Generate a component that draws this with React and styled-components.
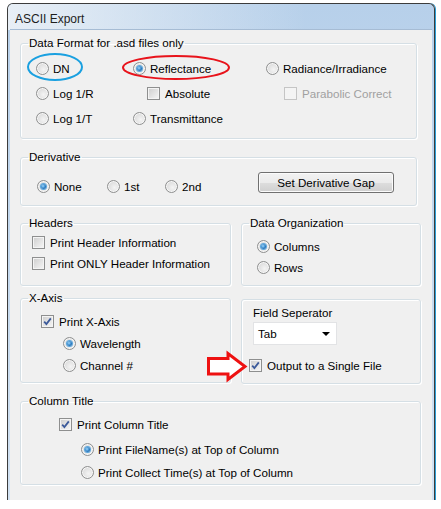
import React from 'react';
import styled, { createGlobalStyle } from 'styled-components';

const GlobalStyle = createGlobalStyle`
  html, body { margin: 0; padding: 0; background: #fff; }
  body {
    font-family: "Liberation Sans", Arial, sans-serif;
    font-size: 11.6px;
    color: #000;
  }
`;

const Page = styled.div`
  padding: 3px 0 0 7px;
`;

const Window = styled.div`
  box-sizing: border-box;
  width: 428px;
  height: 497px;
  display: flex;
  flex-direction: column;
  border: 1px solid #3c3c3c;
  border-bottom: none;
  border-radius: 6px 6px 0 0;
  background: linear-gradient(to bottom, #b7d0ea, #d3e3f3);
  box-shadow: 1px 0 0 #2a9ed6;
  overflow: hidden;
`;

const TitleBar = styled.div`
  height: 26px;
  display: flex;
  align-items: center;
  padding: 3px 0 0 7px;
  box-sizing: border-box;
  font-size: 12px;
  color: #1e1e1e;
  background: linear-gradient(to right, rgba(240, 244, 248, 0.85), rgba(240, 244, 248, 0) 70%);
`;

const Client = styled.div`
  position: relative;
  flex: 1;
  margin: 0 2px;
  padding: 6px 0 0 10px;
  background: #f0f0f0;
  box-shadow: 0 -1px 0 #a6bcd4;
  display: flex;
  flex-direction: column;
`;

const Group = styled.fieldset`
  box-sizing: border-box;
  width: ${p => p.$w}px;
  height: ${p => p.$h}px;
  margin: ${p => p.$mt || 0}px 0 0 0;
  padding: 0;
  min-width: 0;
  border: 1px solid #d5dfe5;
  border-radius: 3px;
  box-shadow: inset 1px 1px 0 #fff, 1px 1px 0 #fff;
`;

const Legend = styled.legend`
  margin-left: 7px;
  padding: 0 1px;
  line-height: 14px;
`;

const Panel = styled.div`
  box-sizing: border-box;
  width: ${p => p.$w}px;
  height: ${p => p.$h}px;
  margin-top: ${p => p.$mt || 0}px;
  padding: 6px 0 0 11px;
  border: 1px solid #d5dfe5;
  border-radius: 3px;
  box-shadow: inset 1px 1px 0 #fff, 1px 1px 0 #fff;
  display: flex;
  flex-direction: column;
`;

const Grid = styled.div`
  display: grid;
  grid-template-columns: ${p => p.$cols || 'auto'};
  grid-auto-rows: ${p => p.$row || 21}px;
  align-items: center;
  padding: ${p => p.$pad};
`;

const Stack = styled.div`
  display: flex;
  flex-direction: column;
  padding: ${p => p.$pad};
`;

const Row = styled.div`
  display: flex;
  gap: 10px;
  margin-top: ${p => p.$mt || 0}px;
`;

const Line = styled.div`
  height: ${p => p.$h || 21}px;
  display: flex;
  align-items: center;
  margin-left: ${p => p.$indent || 0}px;
  margin-top: ${p => p.$mt || 0}px;
  margin-bottom: ${p => p.$mb || 0}px;
`;

const Item = styled.label`
  display: inline-flex;
  align-items: center;
  gap: ${p => p.$gap || 5}px;
  margin-left: ${p => p.$indent || 0}px;
  color: ${p => (p.$disabled ? '#a0a0a0' : '#000')};
  white-space: nowrap;
`;

const RadioDot = styled.span`
  box-sizing: border-box;
  width: 13px;
  height: 13px;
  border-radius: 50%;
  border: 1px solid #8e8f8f;
  background: radial-gradient(circle at 60% 60%, #f4f4f4 0%, #dcdcdc 70%, #cfcfcf 100%);
  box-shadow: inset 0 0 0 1px #f7f7f7;
  display: flex;
  align-items: center;
  justify-content: center;
  flex: none;

  &::after {
    content: '';
    display: ${p => (p.$on ? 'block' : 'none')};
    width: 5px;
    height: 5px;
    border-radius: 50%;
    background: radial-gradient(circle at 40% 40%, #9fd7fa 0%, #2c7fc6 55%, #174e89 100%);
    box-shadow: 0 0 0 1px #5da7dd;
  }
`;

const Box = styled.span`
  box-sizing: border-box;
  width: 13px;
  height: 13px;
  border: 1px solid ${p => (p.$disabled ? '#c5c5c5' : '#8e8f8f')};
  background: ${p => (p.$disabled ? '#f4f4f4' : 'linear-gradient(135deg, #cdcdcd, #f7f7f7)')};
  box-shadow: inset 0 0 0 1px #f4f4f4;
  display: flex;
  align-items: center;
  justify-content: center;
  flex: none;
`;

const Button = styled.div`
  box-sizing: border-box;
  width: 136px;
  height: 21px;
  margin-top: -2px;
  align-self: start;
  display: flex;
  align-items: center;
  justify-content: center;
  border: 1px solid #707070;
  border-radius: 3px;
  background: linear-gradient(to bottom, #f2f2f2 0%, #ebebeb 50%, #dddddd 51%, #cfcfcf 100%);
  box-shadow: inset 0 0 0 1px #fbfbfb;
`;

const Select = styled.div`
  box-sizing: border-box;
  width: 84px;
  height: 23px;
  margin-top: 2px;
  padding: 0 6px 0 4px;
  display: flex;
  align-items: center;
  justify-content: space-between;
  background: #fff;
  border: 1px solid #e2e3e5;
`;

const Caret = styled.span`
  width: 0;
  height: 0;
  border-left: 4px solid transparent;
  border-right: 4px solid transparent;
  border-top: 4px solid #000;
`;

const Caption = styled.div`
  line-height: 14px;
`;

const Overlay = styled.svg`
  position: absolute;
  left: ${p => p.$x}px;
  top: ${p => p.$y}px;
  overflow: visible;
`;

function Radio({ on, children, indent }) {
  return (
    <Item $gap={4} $indent={indent}>
      <RadioDot $on={on} />
      <span>{children}</span>
    </Item>
  );
}

function Check({ on, disabled, children, indent }) {
  return (
    <Item $indent={indent} $disabled={disabled}>
      <Box $disabled={disabled}>
        {on && (
          <svg width="9" height="9" viewBox="0 0 9 9">
            <path d="M1.2 4.6 L3.4 7 L7.8 1.4" fill="none" stroke="#3c5a9a" strokeWidth="1.8" />
          </svg>
        )}
      </Box>
      <span>{children}</span>
    </Item>
  );
}

export default function App() {
  return (
    <Page>
      <GlobalStyle />
      <Window>
        <TitleBar>ASCII Export</TitleBar>
        <Client>
          <Group $w={397} $h={103}>
            <Legend>Data Format for .asd files only</Legend>
            <Grid $cols="97px 133px auto" $row={25} $pad="6px 0 0 15px">
              <Radio>DN</Radio>
              <Radio on>Reflectance</Radio>
              <Radio>Radiance/Irradiance</Radio>
              <Radio>Log 1/R</Radio>
              <Check indent={14}>Absolute</Check>
              <Check indent={18} disabled>Parabolic Correct</Check>
              <Radio>Log 1/T</Radio>
              <Radio>Transmittance</Radio>
            </Grid>
          </Group>

          <Group $w={397} $h={56} $mt={11}>
            <Legend>Derivative</Legend>
            <Grid $cols="70px 58px 93px auto" $row={24} $pad="10px 0 0 16px">
              <Radio on>None</Radio>
              <Radio>1st</Radio>
              <Radio>2nd</Radio>
              <Button>Set Derivative Gap</Button>
            </Grid>
          </Group>

          <Row $mt={10}>
            <Group $w={211} $h={70}>
              <Legend>Headers</Legend>
              <Grid $row={21} $pad="2px 0 0 11px">
                <Check>Print Header Information</Check>
                <Check>Print ONLY Header Information</Check>
              </Grid>
            </Group>
            <Group $w={180} $h={70}>
              <Legend>Data Organization</Legend>
              <Grid $row={21} $pad="6px 0 0 15px">
                <Radio on>Columns</Radio>
                <Radio>Rows</Radio>
              </Grid>
            </Group>
          </Row>

          <Row $mt={5}>
            <Group $w={211} $h={92}>
              <Legend>X-Axis</Legend>
              <Stack $pad="5px 0 0 20px">
                <Line $h={22}><Check on>Print X-Axis</Check></Line>
                <Line $h={22} $indent={22}><Radio on>Wavelength</Radio></Line>
                <Line $h={22} $indent={22}><Radio>Channel #</Radio></Line>
              </Stack>
            </Group>
            <Panel $w={180} $h={85} $mt={8}>
              <Caption>Field Seperator</Caption>
              <Select>
                <span>Tab</span>
                <Caret />
              </Select>
              <Line $h={20} $indent={-4} $mt={10}>
                <Check on>Output to a Single File</Check>
              </Line>
            </Panel>
          </Row>

          <Group $w={401} $h={91} $mt={10}>
            <Legend>Column Title</Legend>
            <Stack $pad="5px 0 0 38px">
              <Line $h={22} $mb={3}><Check on>Print Column Title</Check></Line>
              <Line $h={23} $indent={22}><Radio on>Print FileName(s) at Top of Column</Radio></Line>
              <Line $h={23} $indent={22}><Radio>Print Collect Time(s) at Top of Column</Radio></Line>
            </Stack>
          </Group>

          <Overlay $x={17} $y={23} width="56" height="28">
            <ellipse cx="28" cy="14" rx="27" ry="13" fill="none" stroke="#1aa0e0" strokeWidth="2" />
          </Overlay>
          <Overlay $x={112} $y={25} width="108" height="25">
            <ellipse cx="54" cy="12.5" rx="53" ry="11.5" fill="none" stroke="#e8131b" strokeWidth="2" />
          </Overlay>
          <Overlay $x={197} $y={322} width="40" height="29">
            <path d="M1.5 6.5 H21 V1.5 L38 14.5 L21 27.5 V22 H1.5 Z" fill="#fff" stroke="#ee1111" strokeWidth="3" strokeLinejoin="miter" />
          </Overlay>
        </Client>
      </Window>
    </Page>
  );
}
